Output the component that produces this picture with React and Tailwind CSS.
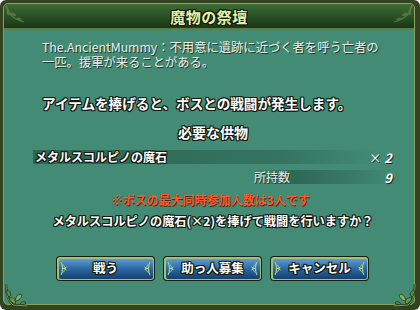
const outline =
  '[text-shadow:1px_0_0_#10180f,-1px_0_0_#10180f,0_1px_0_#10180f,0_-1px_0_#10180f,1px_1px_0_#10180f,-1px_-1px_0_#10180f,1px_-1px_0_#10180f,-1px_1px_0_#10180f]';

const Leaves = ({ flip }) => (
  <svg width="26" height="26" viewBox="0 0 26 26" className={flip ? 'scale-x-[-1]' : ''}>
    <path d="M3 2 C3 10 4 18 10 23 L24 24" fill="none" stroke="#1d3516" strokeWidth="2.4" />
    <path d="M3 2 C3 10 4 18 10 23 L24 24" fill="none" stroke="#7fa653" strokeWidth="1" />
    <path d="M4 8 C8 9 9 13 6 15 C4 13 3 11 4 8Z" fill="#5f8a3e" stroke="#1d3516" strokeWidth="0.8" />
    <path d="M6 16 C11 15 14 18 12 22 C9 21 7 19 6 16Z" fill="#6f9a48" stroke="#1d3516" strokeWidth="0.8" />
    <path d="M12 19 C13 13 17 11 19 13 C18 17 15 19 12 19Z" fill="#86b05a" stroke="#1d3516" strokeWidth="0.8" />
    <path d="M17 22 C19 19 22 19 23 21 C21 23 19 23 17 22Z" fill="#5f8a3e" stroke="#1d3516" strokeWidth="0.8" />
  </svg>
);

const Vine = ({ flip }) => (
  <svg width="24" height="22" viewBox="0 0 24 22" className={flip ? 'scale-x-[-1]' : ''} opacity="0.45">
    <path d="M2 20 C4 12 8 6 20 3" fill="none" stroke="#8fb070" strokeWidth="1.2" />
    <path d="M6 12 C8 8 12 8 12 10 C10 13 8 13 6 12Z" fill="#7fa060" />
    <path d="M12 7 C14 3 18 3 18 5 C16 8 14 8 12 7Z" fill="#7fa060" />
    <path d="M4 16 C2 12 3 9 5 10 C6 12 6 14 4 16Z" fill="#7fa060" />
  </svg>
);

const BtnLeaf = ({ flip }) => (
  <svg width="8" height="15" viewBox="0 0 8 15" className={flip ? 'scale-x-[-1]' : ''}>
    <path d="M1 1 C3 4 3 11 1 14" fill="none" stroke="#a8cc88" strokeWidth="1.2" />
    <path d="M2 7.5 L7 5.5 L5.5 7.5 L7 9.5 Z" fill="#b8da96" />
    <path d="M2 4 C4 4 5 5 4 6" fill="none" stroke="#a8cc88" strokeWidth="0.9" />
    <path d="M2 11 C4 11 5 10 4 9" fill="none" stroke="#a8cc88" strokeWidth="0.9" />
  </svg>
);

const Button = ({ label }) => (
  <div className="w-[99px] h-[25px] rounded-[4px] bg-[#15200f] p-[1px]">
    <div className="h-full rounded-[3px] bg-[#9fc07e] p-[1.5px]">
      <div className="h-full rounded-[2px] bg-gradient-to-b from-[#5d9bd0] via-[#2a67a3] to-[#14406f] flex items-center justify-between px-[1px]">
        <BtnLeaf />
        <span className={`text-white font-bold text-[12.5px] leading-none ${outline}`}>{label}</span>
        <BtnLeaf flip />
      </div>
    </div>
  </div>
);

export default function App() {
  return (
    <div
      className="relative w-[420px] h-[310px] bg-[#33431f] rounded-[6px] pt-[3px] pl-[3px] pr-[5px] pb-[5px]"
      style={{ fontFamily: '"Noto Sans CJK JP", "Noto Sans", sans-serif' }}
    >
      <div className="h-full rounded-[5px] border border-[#86a562] flex flex-col overflow-hidden bg-[#438b74]">
        <div className="h-[26px] shrink-0 bg-gradient-to-b from-[#3c6b33] via-[#2b5226] to-[#1b3617] border-b-[2px] border-[#5e7d44] flex items-center justify-center">
          <span className={`text-[#e4f3a2] font-bold text-[15px] leading-none tracking-[0.5px] ${outline}`}>魔物の祭壇</span>
        </div>

        <div className="flex-1 flex flex-col text-white">
          <p className="mt-[10px] ml-[38px] w-[342px] text-[12.3px] leading-[15px] text-[#ecefe9] [text-shadow:1px_1px_0_#1c3a30]">
            The.AncientMummy：不用意に遺跡に近づく者を呼う亡者の一匹。援軍が来ることがある。
          </p>

          <div className={`mt-[24px] pl-[38px] text-[13.6px] leading-[18px] font-bold ${outline}`}>
            アイテムを捧げると、ボスとの戦闘が発生します。
          </div>

          <div className={`mt-[11px] text-center pl-[8px] text-[14px] leading-[18px] font-bold ${outline}`}>
            必要な供物
          </div>

          <div className="mt-[9px] ml-[29px] mr-[22px] h-[14px] flex items-center justify-between bg-[linear-gradient(to_right,rgba(25,70,55,0.55),rgba(35,90,72,0.45)_70%,rgba(67,139,116,0)_96%)]">
            <span className={`text-[12px] leading-none font-bold pl-[2px] ${outline}`}>メタルスコルピノの魔石</span>
            <span className="text-[13px] leading-none font-bold italic [text-shadow:1px_1px_0_#14261f]">
              <span className="text-[12px] font-normal not-italic">×</span> 2
            </span>
          </div>

          <div className="mt-[6px] mr-[22px] h-[14px] flex justify-end">
            <div className="w-[140px] flex items-center justify-between bg-[linear-gradient(to_right,rgba(25,70,55,0),rgba(25,70,55,0.5)_30%,rgba(35,90,72,0.35)_70%,rgba(67,139,116,0)_100%)]">
              <span className="text-[12px] leading-none text-[#ecefe9] pl-[2px] [text-shadow:1px_1px_0_#1c3a30]">所持数</span>
              <span className="text-[13px] leading-none font-bold italic [text-shadow:1px_1px_0_#14261f]">9</span>
            </div>
          </div>

          <div className="mt-[8px] text-center pl-[2px] text-[12px] leading-[16px] font-bold text-[#ff5a26] [text-shadow:1px_1px_0_#3a2a20]">
            ※ボスの最大同時参加人数は3人です
          </div>

          <div className={`mt-[5px] text-center pl-[8px] text-[12.2px] leading-[16px] font-bold ${outline}`}>
            メタルスコルピノの魔石(×2)を捧げて戦闘を行いますか？
          </div>

          <div className="mt-[27px] pl-[52px] flex gap-[8px]">
            <Button label="戦う" />
            <Button label="助っ人募集" />
            <Button label="キャンセル" />
          </div>
        </div>
      </div>

      <div className="absolute left-[3px] bottom-[2px]">
        <Leaves />
      </div>
      <div className="absolute right-[2px] bottom-[2px]">
        <Leaves flip />
      </div>
      <div className="absolute left-[4px] top-[3px] scale-y-[-1]">
        <Vine />
      </div>
      <div className="absolute right-[6px] top-[3px] scale-y-[-1]">
        <Vine flip />
      </div>
    </div>
  );
}
